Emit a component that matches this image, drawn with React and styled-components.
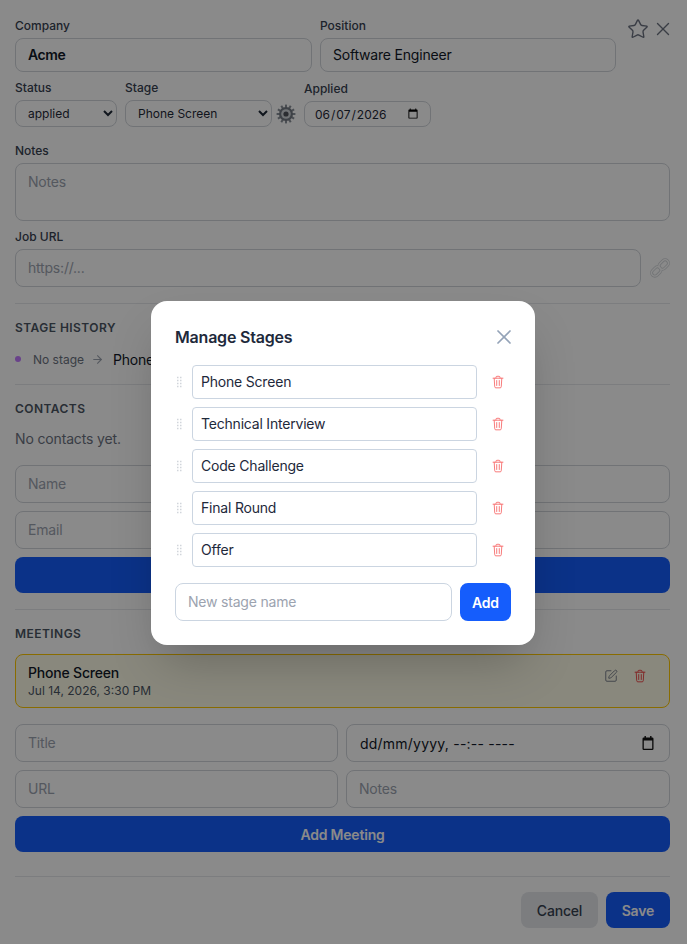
import React from "react";
import styled, { createGlobalStyle } from "styled-components";
import { Star, X, ArrowRight, SquarePen } from "lucide-react";

const GlobalStyle = createGlobalStyle`
  html, body {
    margin: 0;
    padding: 0;
    background: #fff;
    font-family: Inter, "Liberation Sans", sans-serif;
    color: #111827;
  }
  * { box-sizing: border-box; }
  input::placeholder, textarea::placeholder { color: #9ca3af; opacity: 1; }
`;

const Page = styled.div`
  position: relative;
  width: 687px;
  height: 944px;
  overflow: hidden;
  padding: 18px 17px 15px 15px;
  background: #fff;
`;

const TopRow = styled.div`
  display: flex;
  align-items: flex-start;
  gap: 8px;
`;

const TopFields = styled.div`
  display: grid;
  grid-template-columns: 297px 296px;
  gap: 8px;
`;

const TopIcons = styled.div`
  display: flex;
  align-items: center;
  gap: 3px;
  margin: 0 0 0 3px;
  color: #6b7280;
`;

const Field = styled.div`
  display: flex;
  flex-direction: column;
  margin-top: ${(p) => p.$top || 0}px;
`;

const Label = styled.label`
  display: block;
  font-size: 12px;
  line-height: 16px;
  font-weight: 500;
  color: #374151;
  margin-bottom: 4px;
`;

const Input = styled.input`
  width: 100%;
  height: ${(p) => p.$h || 38}px;
  border: 1px solid #d1d5db;
  border-radius: 8px;
  padding: 0 12px 1px;
  font: ${(p) => (p.$strong ? 600 : 400)} 14px Inter, sans-serif;
  letter-spacing: ${(p) => (p.$strong ? -0.4 : -0.2)}px;
  color: #111827;
  background: #fff;
  outline: none;
`;

const Select = styled.select`
  height: 27px;
  width: 100%;
  border: 1px solid #d1d5db;
  border-radius: 8px;
  padding: 0 8px;
  font: 400 12px Inter, sans-serif;
  color: #1f2937;
  background: #fff;
  outline: none;
`;

const DateInput = styled.input`
  height: 26px;
  width: 127px;
  border: 1px solid #d1d5db;
  border-radius: 8px;
  padding: 0 9px;
  font: 400 12px Inter, sans-serif;
  color: #1f2937;
  background: #fff;
  outline: none;
`;

const StatusRow = styled.div`
  display: grid;
  grid-template-columns: 102px 147px 16px 127px;
  column-gap: 8px;
  align-items: end;
  margin-top: 8px;
`;

const GearSlot = styled.div`
  width: 20px;
  height: 27px;
  margin-left: -4px;
  display: flex;
  align-items: center;
  justify-content: center;
`;

const Textarea = styled.textarea`
  display: block;
  width: 100%;
  height: 58px;
  border: 1px solid #d1d5db;
  border-radius: 8px;
  padding: 9px 12px;
  font: 400 14px Inter, sans-serif;
  letter-spacing: -0.2px;
  resize: none;
  outline: none;
  background: #fff;
`;

const UrlRow = styled.div`
  display: flex;
  align-items: center;
  gap: 9px;
`;

const Section = styled.section`
  margin-top: 16px;
  padding-top: 16px;
  border-top: 1px solid #e5e7eb;
`;

const SectionTitle = styled.h3`
  margin: 0;
  font-size: 12px;
  line-height: 16px;
  font-weight: 600;
  letter-spacing: 0.45px;
  color: #4b5563;
  text-transform: uppercase;
`;

const History = styled.div`
  display: flex;
  align-items: center;
  margin-top: 15px;
  height: 17px;
  font-size: 12px;
  color: #6b7280;
`;

const Dot = styled.span`
  width: 6px;
  height: 6px;
  margin: -2px 12px 0 0;
  border-radius: 50%;
  background: #c27aff;
`;

const StageName = styled.span`
  font-size: 14px;
  letter-spacing: -0.2px;
  color: #111827;
`;

const Arrow = styled(ArrowRight)`
  margin: 0 9px 0 7px;
  color: #9ca3af;
`;

const Empty = styled.p`
  margin: 12px 0 16px;
  font-size: 14px;
  line-height: 20px;
  letter-spacing: -0.15px;
  color: #6b7280;
`;

const TwoCols = styled.div`
  display: grid;
  grid-template-columns: 323px 324px;
  gap: 8px;
  margin-top: ${(p) => p.$top || 0}px;
`;

const WideButton = styled.button`
  display: block;
  width: 100%;
  height: 36px;
  margin-top: 8px;
  border: 0;
  border-radius: 8px;
  background: #155dfc;
  color: #fff;
  font: 600 14px Inter, sans-serif;
  letter-spacing: -0.2px;
`;

const MeetingCard = styled.div`
  display: flex;
  justify-content: space-between;
  height: 54px;
  margin-top: 12px;
  padding: 10px 22px 0 12px;
  border: 1px solid #fdc700;
  border-radius: 8px;
  background: #fefce8;
`;

const MeetingTitle = styled.div`
  font-size: 14px;
  line-height: 16px;
  font-weight: 500;
  letter-spacing: -0.2px;
  color: #111827;
`;

const MeetingTime = styled.div`
  margin-top: 2px;
  font-size: 12px;
  line-height: 16px;
  color: #4b5563;
`;

const MeetingActions = styled.div`
  display: flex;
  gap: 15px;
  padding-top: 4px;
  color: #6b7280;
`;

const DateBox = styled.div`
  display: flex;
  align-items: center;
  justify-content: space-between;
  height: 38px;
  border: 1px solid #d1d5db;
  border-radius: 8px;
  padding: 0 15px 0 13px;
  font-size: 14px;
  letter-spacing: 0.22px;
  color: #111827;
  background: #fff;
`;

const Footer = styled.div`
  display: flex;
  justify-content: flex-end;
  gap: 8px;
  margin-top: 24px;
  padding-top: 15px;
  border-top: 1px solid #e5e7eb;
`;

const FooterButton = styled.button`
  height: 36px;
  padding: 0 ${(p) => (p.$primary ? 16 : 15.5)}px;
  border: 0;
  border-radius: 8px;
  background: ${(p) => (p.$primary ? "#155dfc" : "#e5e7eb")};
  color: ${(p) => (p.$primary ? "#fff" : "#374151")};
  font: ${(p) => (p.$primary ? 600 : 500)} 14px Inter, sans-serif;
  letter-spacing: -0.2px;
`;

const Overlay = styled.div`
  position: absolute;
  inset: 0;
  display: flex;
  align-items: center;
  justify-content: center;
  padding: 2px 1px 0 0;
  background: rgba(0, 0, 0, 0.46);
`;

const Modal = styled.div`
  width: 384px;
  height: 344px;
  padding: 24px;
  border-radius: 16px;
  background: #fff;
  box-shadow: 0 25px 50px -12px rgba(0, 0, 0, 0.25);
`;

const ModalHead = styled.div`
  display: flex;
  align-items: center;
  justify-content: space-between;
  height: 24px;
  margin-bottom: 16px;
  color: #94a3b8;
`;

const ModalClose = styled(X)`
  margin-right: -5px;
`;

const ModalTitle = styled.h2`
  margin: 0;
  font-size: 16px;
  line-height: 24px;
  font-weight: 600;
  letter-spacing: -0.2px;
  color: #1e293b;
`;

const StageList = styled.div`
  display: flex;
  flex-direction: column;
  gap: 8px;
`;

const StageRow = styled.div`
  display: flex;
  align-items: center;
  height: 34px;
`;

const StageInput = styled.input`
  width: 285px;
  height: 34px;
  margin: 0 14px 0 9px;
  padding: 0 8px 1px;
  border: 1px solid #cbd5e1;
  border-radius: 4px;
  font: 400 14px Inter, sans-serif;
  letter-spacing: -0.2px;
  color: #1e293b;
  background: #fff;
  outline: none;
`;

const AddRow = styled.div`
  display: flex;
  gap: 8px;
  margin-top: 16px;
`;

const NewInput = styled.input`
  flex: 1;
  min-width: 0;
  height: 38px;
  padding: 0 12px 1px;
  border: 1px solid #cbd5e1;
  border-radius: 8px;
  font: 400 14px Inter, sans-serif;
  letter-spacing: -0.2px;
  outline: none;
`;

const AddButton = styled.button`
  width: 51px;
  height: 38px;
  border: 0;
  border-radius: 8px;
  background: #155dfc;
  color: #fff;
  font: 600 14px Inter, sans-serif;
  letter-spacing: -0.2px;
`;

const ChainSvg = styled.svg`
  flex-shrink: 0;
`;

// bin used next to stages and meetings
const Bin = ({ color = "#f87171" }) => (
  <svg width="14" height="14" viewBox="0 0 24 24" fill="none" stroke={color} strokeWidth="1.6" strokeLinecap="round" strokeLinejoin="round">
    <path d="M3.5 5.5h17" />
    <path d="M8.5 5.5V4a1.8 1.8 0 0 1 1.8-1.8h3.4A1.8 1.8 0 0 1 15.5 4v1.5" />
    <path d="M5.5 5.5l.9 14.6a2 2 0 0 0 2 1.9h7.2a2 2 0 0 0 2-1.9l.9-14.6" />
    <path d="M9.8 9.5v8.5M14.2 9.5v8.5" />
  </svg>
);

const Grip = () => (
  <svg width="8" height="12" viewBox="0 0 8 12" fill="#d1d5db">
    {[1.5, 4.5, 7.5, 10.5].map((y) => (
      <React.Fragment key={y}>
        <rect x="2" y={y - 0.75} width="1.5" height="1.5" />
        <rect x="5" y={y - 0.75} width="1.5" height="1.5" />
      </React.Fragment>
    ))}
  </svg>
);

const Gear = () => {
  const teeth = Array.from({ length: 12 }, (_, i) => i * 30);
  return (
    <svg width="20" height="20" viewBox="0 0 20 20">
      {teeth.map((a) => (
        <rect key={a} x="9" y="0.6" width="2" height="4" fill="#8a9099" transform={`rotate(${a} 10 10)`} />
      ))}
      <circle cx="10" cy="10" r="7" fill="#747a83" />
      <circle cx="10" cy="10" r="4.8" fill="#d0d4d9" />
      <circle cx="10" cy="10" r="2.6" fill="#50545c" />
    </svg>
  );
};

const ChainLink = () => (
  <ChainSvg width="20" height="20" viewBox="0 0 20 20" fill="none">
    <g stroke="#d4d7db" strokeWidth="3">
      <rect x="1" y="10.2" width="10.5" height="6.6" rx="3.3" transform="rotate(-45 6.2 13.5)" />
      <rect x="8.5" y="3.2" width="10.5" height="6.6" rx="3.3" transform="rotate(-45 13.8 6.5)" />
    </g>
    <g stroke="#ffffff" strokeWidth="1.3">
      <rect x="1" y="10.2" width="10.5" height="6.6" rx="3.3" transform="rotate(-45 6.2 13.5)" />
      <rect x="8.5" y="3.2" width="10.5" height="6.6" rx="3.3" transform="rotate(-45 13.8 6.5)" />
    </g>
  </ChainSvg>
);

const CalendarGlyph = () => (
  <svg width="12" height="14" viewBox="0 0 12 14">
    <path fill="#111" d="M2.5 0h1.4v1.5h4.2V0h1.4v1.5h.7A1.3 1.3 0 0 1 11.5 2.8v9.9A1.3 1.3 0 0 1 10.2 14H1.8A1.3 1.3 0 0 1 .5 12.7V2.8A1.3 1.3 0 0 1 1.8 1.5h.7V0zM1.8 4.6v8.1h8.4V4.6H1.8z" />
  </svg>
);

const stages = ["Phone Screen", "Technical Interview", "Code Challenge", "Final Round", "Offer"];

export default function App() {
  return (
    <>
      <GlobalStyle />
      <Page>
        <TopRow>
          <TopFields>
            <Field>
              <Label>Company</Label>
              <Input $h={34} $strong defaultValue="Acme" />
            </Field>
            <Field>
              <Label>Position</Label>
              <Input $h={34} defaultValue="Software Engineer" />
            </Field>
          </TopFields>
          <TopIcons>
            <Star size={22} strokeWidth={1.5} />
            <X size={22} strokeWidth={1.5} />
          </TopIcons>
        </TopRow>

        <StatusRow>
          <Field>
            <Label>Status</Label>
            <Select defaultValue="applied">
              <option>applied</option>
              <option>interview</option>
              <option>offer</option>
            </Select>
          </Field>
          <Field>
            <Label>Stage</Label>
            <Select defaultValue="Phone Screen">
              {stages.map((s) => (
                <option key={s}>{s}</option>
              ))}
            </Select>
          </Field>
          <GearSlot>
            <Gear />
          </GearSlot>
          <Field>
            <Label>Applied</Label>
            <DateInput type="date" defaultValue="2026-06-07" />
          </Field>
        </StatusRow>

        <Field $top={16}>
          <Label>Notes</Label>
          <Textarea placeholder="Notes" />
        </Field>

        <Field $top={8}>
          <Label>Job URL</Label>
          <UrlRow>
            <Input placeholder="https://..." />
            <ChainLink />
          </UrlRow>
        </Field>

        <Section>
          <SectionTitle>Stage History</SectionTitle>
          <History>
            <Dot />
            No stage
            <Arrow size={13} />
            <StageName>Phone Screen</StageName>
          </History>
        </Section>

        <Section>
          <SectionTitle>Contacts</SectionTitle>
          <Empty>No contacts yet.</Empty>
          <TwoCols>
            <Input placeholder="Name" />
            <Input placeholder="Role" />
            <Input placeholder="Email" />
            <Input placeholder="Phone" />
          </TwoCols>
          <WideButton>Add Contact</WideButton>
        </Section>

        <Section>
          <SectionTitle>Meetings</SectionTitle>
          <MeetingCard>
            <div>
              <MeetingTitle>Phone Screen</MeetingTitle>
              <MeetingTime>Jul 14, 2026, 3:30 PM</MeetingTime>
            </div>
            <MeetingActions>
              <SquarePen size={14} strokeWidth={1.5} />
              <Bin color="#ef4444" />
            </MeetingActions>
          </MeetingCard>
          <TwoCols $top={16}>
            <Input placeholder="Title" />
            <DateBox>
              dd/mm/yyyy, --:-- ----
              <CalendarGlyph />
            </DateBox>
            <Input placeholder="URL" />
            <Input placeholder="Notes" />
          </TwoCols>
          <WideButton>Add Meeting</WideButton>
        </Section>

        <Footer>
          <FooterButton>Cancel</FooterButton>
          <FooterButton $primary>Save</FooterButton>
        </Footer>

        <Overlay>
          <Modal>
            <ModalHead>
              <ModalTitle>Manage Stages</ModalTitle>
              <ModalClose size={24} strokeWidth={1.75} />
            </ModalHead>
            <StageList>
              {stages.map((s) => (
                <StageRow key={s}>
                  <Grip />
                  <StageInput defaultValue={s} />
                  <Bin />
                </StageRow>
              ))}
            </StageList>
            <AddRow>
              <NewInput placeholder="New stage name" />
              <AddButton>Add</AddButton>
            </AddRow>
          </Modal>
        </Overlay>
      </Page>
    </>
  );
}
